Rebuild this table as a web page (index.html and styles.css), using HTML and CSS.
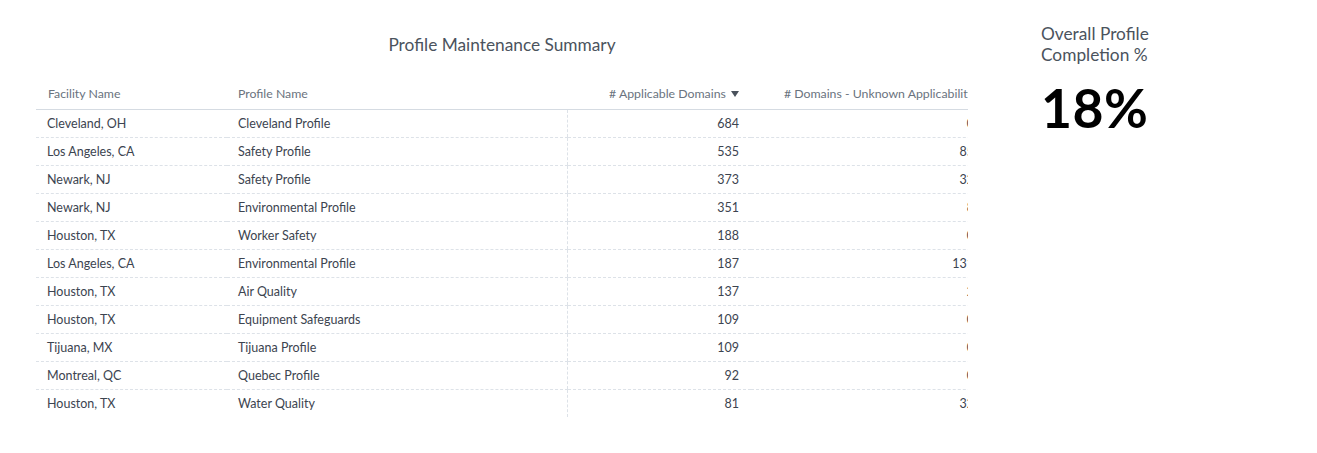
FILE: index.html
```html
<!DOCTYPE html>
<html>
<head>
<meta charset="utf-8">
<link rel="stylesheet" href="styles.css">
</head>
<body>
<div class="page">
  <section class="report">
    <h1 class="title">Profile Maintenance Summary</h1>
    <div class="table-clip">
      <table class="grid">
        <colgroup>
          <col class="c1"><col class="c2"><col class="c3"><col class="c4">
        </colgroup>
        <thead>
          <tr>
            <th>Facility Name</th>
            <th>Profile Name</th>
            <th class="num divider">
              # Applicable Domains
              <svg class="sort" width="8" height="6" viewBox="0 0 8 6"><path d="M0 0H8L4 6Z" fill="#4a525c"/></svg>
            </th>
            <th class="num">
              # Domains - Unknown Applicability</th>
          </tr>
        </thead>
        <tbody>
          <tr><td>Cleveland, OH</td><td>Cleveland Profile</td><td class="num divider">684</td><td class="num">0</td></tr>
          <tr><td>Los Angeles, CA</td><td>Safety Profile</td><td class="num divider">535</td><td class="num">85</td></tr>
          <tr><td>Newark, NJ</td><td>Safety Profile</td><td class="num divider">373</td><td class="num">32</td></tr>
          <tr><td>Newark, NJ</td><td>Environmental Profile</td><td class="num divider">351</td><td class="num">8</td></tr>
          <tr><td>Houston, TX</td><td>Worker Safety</td><td class="num divider">188</td><td class="num">0</td></tr>
          <tr><td>Los Angeles, CA</td><td>Environmental Profile</td><td class="num divider">187</td><td class="num">131</td></tr>
          <tr><td>Houston, TX</td><td>Air Quality</td><td class="num divider">137</td><td class="num">2</td></tr>
          <tr><td>Houston, TX</td><td>Equipment Safeguards</td><td class="num divider">109</td><td class="num">0</td></tr>
          <tr><td>Tijuana, MX</td><td>Tijuana Profile</td><td class="num divider">109</td><td class="num">0</td></tr>
          <tr><td>Montreal, QC</td><td>Quebec Profile</td><td class="num divider">92</td><td class="num">0</td></tr>
          <tr><td>Houston, TX</td><td>Water Quality</td><td class="num divider">81</td><td class="num">32</td></tr>
        </tbody>
      </table>
    </div>
  </section>
  <section class="kpi">
    <div class="kpi-label">Overall Profile<br>Completion %</div>
    <div class="kpi-value">18%</div>
  </section>
</div>
</body>
</html>
```

FILE: styles.css
```css
html, body {
  margin: 0;
  padding: 0;
  background: #ffffff;
}

body {
  font-family: Lato, "Open Sans", "Liberation Sans", sans-serif;
  color: #3c4450;
}

.page {
  display: flex;
  padding-left: 36px;
}

.report {
  width: 932px;
  flex: none;
}

.title {
  margin: 0;
  padding-top: 34px;
  height: 78px;
  box-sizing: border-box;
  font-size: 17.3px;
  line-height: 22px;
  font-weight: 400;
  color: #4b535d;
  text-align: center;
}

.table-clip {
  width: 932px;
  overflow: hidden;
}

.grid {
  border-collapse: collapse;
  table-layout: fixed;
  width: 950px;
}

.c1 { width: 191px; }
.c2 { width: 340px; }
.c3 { width: 184px; }
.c4 { width: 235px; }

.grid th {
  height: 31px;
  padding: 0 12px 0 11px;
  font-size: 12.3px;
  font-weight: 400;
  color: #6a737e;
  text-align: left;
  white-space: nowrap;
  vertical-align: middle;
  border-bottom: 1px solid #d5dbe2;
}

.grid th:first-child {
  padding-left: 12px;
}

.grid th.num {
  text-align: right;
}

.grid td {
  height: 27px;
  padding: 0 12px 0 11px;
  font-size: 12.5px;
  color: #3c4450;
  white-space: nowrap;
  vertical-align: middle;
  border-bottom: 1px dashed #dde2e8;
}

.grid tbody tr:last-child td {
  border-bottom: none;
}

.grid td.num {
  text-align: right;
}

.grid td.divider {
  border-left: 1px dashed #dde2e8;
}

.sort {
  margin-left: 2px;
  vertical-align: 1px;
}

.kpi {
  margin-left: 73px;
  padding-top: 23px;
}

.kpi-label {
  font-size: 17.3px;
  line-height: 21px;
  color: #4b535d;
}

.kpi-value {
  margin-top: 11px;
  font-size: 53.5px;
  line-height: 62px;
  font-weight: 700;
  color: #000000;
  letter-spacing: 0.5px;
}
```
